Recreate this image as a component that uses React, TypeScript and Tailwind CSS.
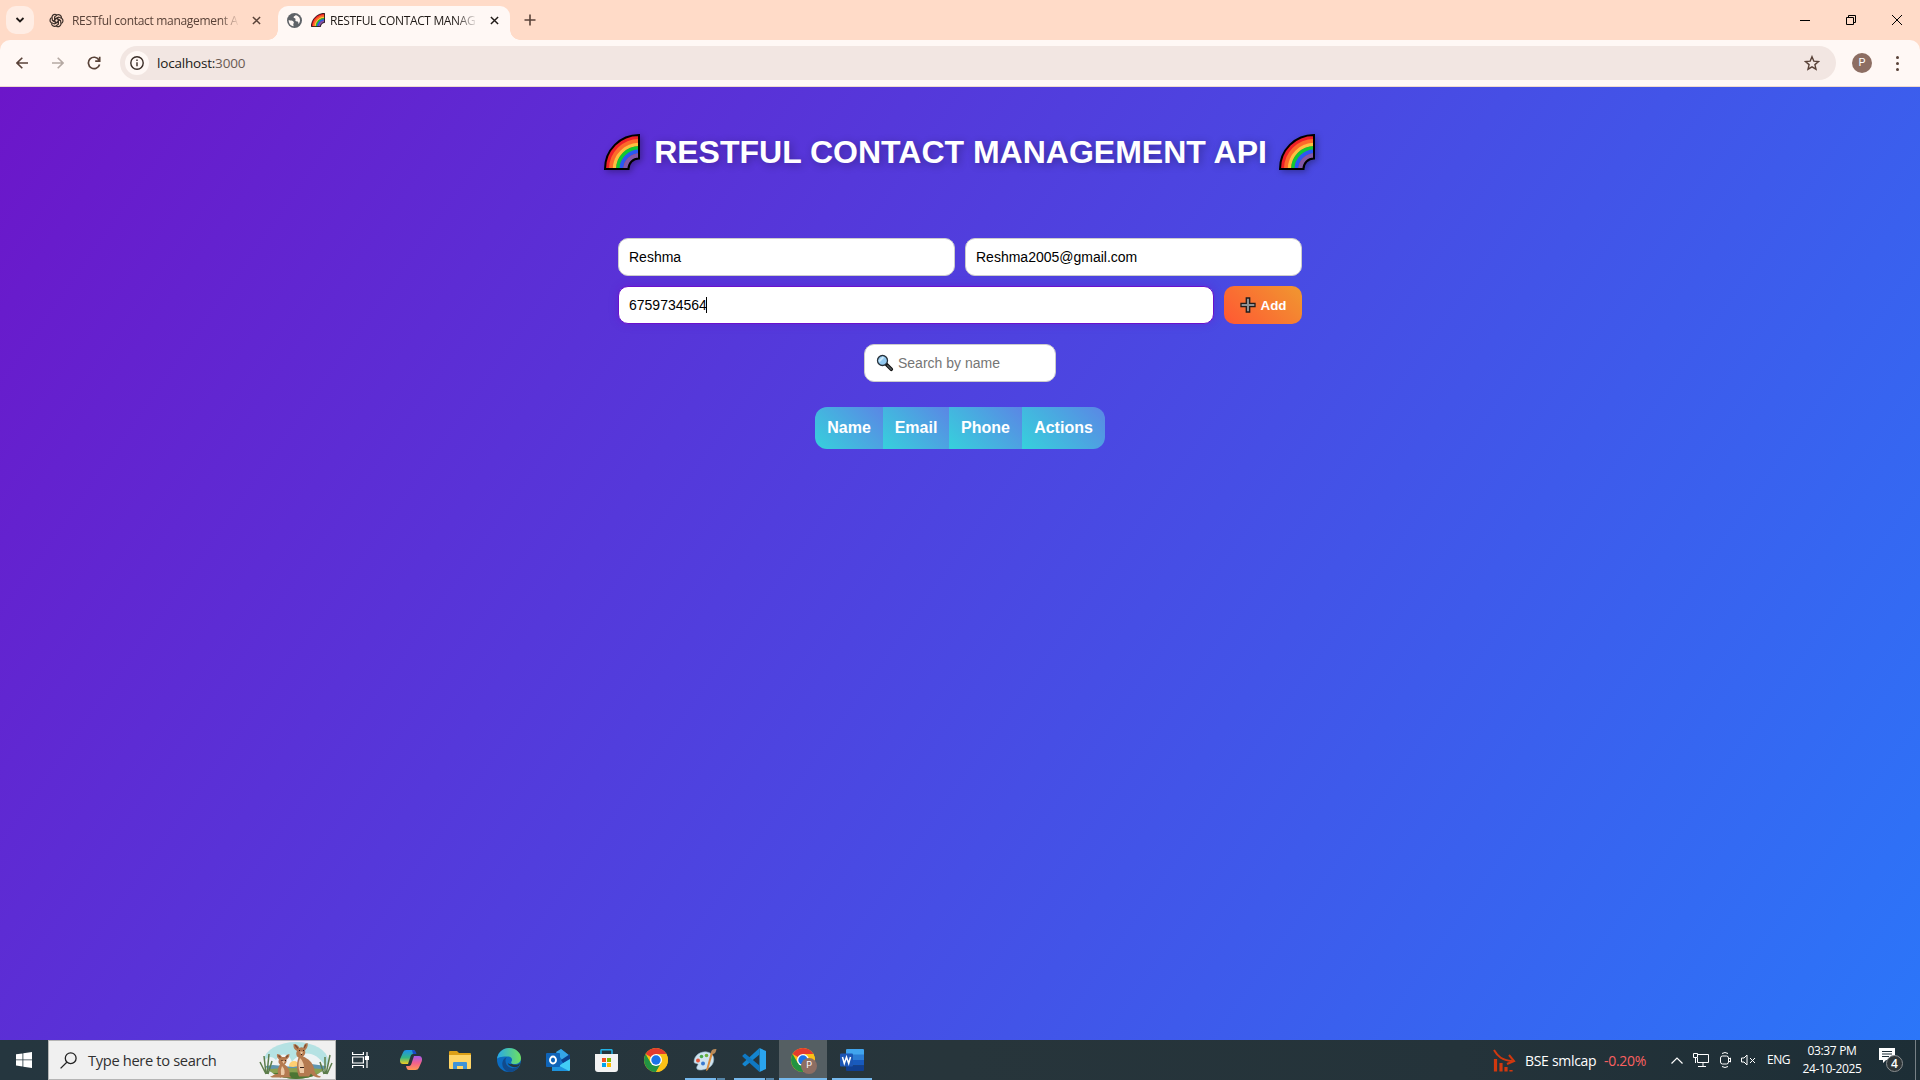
import React from "react";

type P = { className?: string };

const Rainbow = ({ className = "" }: P) => (
  <svg viewBox="0 0 36 36" className={className} fill="none">
    <path d="M35 1v23.500c-6 0-10.500 4.500-10.500 10.500H1C1 16 16 1 35 1z" fill="#f22c2c" />
    <path d="M35 3.500C18 3.500 3.500 18 3.500 35" stroke="#ee2028" strokeWidth="4" />
    <path d="M35 7C19.500 7 7 19.500 7 35" stroke="#fc6a2a" strokeWidth="4" />
    <path d="M35 10.500C21.500 10.500 10.500 21.500 10.500 35" stroke="#ffbf3f" strokeWidth="3.500" />
    <path d="M35 14C23.500 14 14 23.500 14 35" stroke="#12c832" strokeWidth="4" />
    <path d="M35 17.500C25.500 17.500 17.500 25.500 17.500 35" stroke="#2a58f2" strokeWidth="4" />
    <path d="M35 22C28 22 22 28 22 35" stroke="#8458a8" strokeWidth="5" />
    <path d="M35 1v23.500c-6 0-10.500 4.500-10.500 10.500H1C1 16 16 1 35 1z" stroke="#000" strokeWidth="2" />
  </svg>
);

const Chrome = ({ className = "" }: P) => (
  <svg viewBox="0 0 24 24" className={className}>
    <circle cx="12" cy="12" r="12" fill="#fbc116" />
    <path d="M12 12L1.610 6A12 12 0 0 1 22.390 6H12z" fill="#e33b2e" />
    <path d="M1.610 6A12 12 0 0 0 12 24L17.200 15 12 12 6.800 15z" fill="#229342" />
    <path d="M12 24A12 12 0 0 0 22.390 6H12l5.200 9z" fill="#fbc116" />
    <circle cx="12" cy="12" r="6" fill="#fff" />
    <circle cx="12" cy="12" r="4.700" fill="#1a73e8" />
  </svg>
);

const Close = ({ className = "" }: P) => (
  <svg viewBox="0 0 10 10" className={className} stroke="currentColor" strokeWidth="1.600">
    <path d="M1 1l8 8M9 1L1 9" />
  </svg>
);

function TabStrip() {
  return (
    <div className="flex h-10 items-start bg-[#ffdbc8]">
      <div className="ml-1.5 mt-1.5 flex h-7 w-7 items-center justify-center rounded-[10px] bg-[#ffede4]">
        <svg viewBox="0 0 10 10" className="h-2.5 w-2.5" fill="none" stroke="#201a17" strokeWidth="1.800">
          <path d="M1.500 3l3.500 3.500L8.500 3" />
        </svg>
      </div>
      <div className="ml-[15px] mt-1.5 flex h-[28px] w-[215px] items-center text-[#594238]">
        <svg viewBox="0 0 24 24" className="h-[15px] w-[15px]" fill="none" stroke="#3d302a" strokeWidth="1.900">
          {[0, 60, 120, 180, 240, 300].map((a) => (
            <path key={a} transform={`rotate(${a} 12 12)`} d="M9 13.700V6.200l4.500-3.400c3-1 6.500 1 6.500 5M9 10.300l6-3.500" />
          ))}
        </svg>
        <span className="ml-[8px] w-[168px] whitespace-nowrap pt-px font-['Open_Sans'] text-[12px] tracking-[-0.310px] [mask-image:linear-gradient(to_right,#000_88%,transparent)]">
          RESTful contact management A
        </span>
        <Close className="ml-[12px] h-[9px] w-[9px]" />
      </div>
      <div className="relative ml-[14px] mt-1.5 flex h-[34px] w-[232px] rounded-t-[10px] bg-[#fff8f5] pb-[6px] text-[#201a17]">
        <div className="absolute -left-[10px] bottom-0 h-[10px] w-[10px] bg-[radial-gradient(circle_at_0_0,transparent_9.500px,#fff8f5_10px)]" />
        <div className="absolute -right-[10px] bottom-0 h-[10px] w-[10px] bg-[radial-gradient(circle_at_100%_0,transparent_9.500px,#fff8f5_10px)]" />
        <div className="flex items-center pl-[9px]">
          <svg viewBox="0 0 16 16" className="h-[15px] w-[15px]">
            <circle cx="8" cy="8" r="8" fill="#5f6368" />
            <path d="M1.800 7.500c2 .8 4.600.3 5.400 2 .5 1.200-.7 1.500-.5 3 .1.700.5 1.200.3 1.700C3.600 13.700 1.700 11 1.800 7.500zM9.200 2c-.2 1.200-2 1-2.200 2.200-.2 1.300 1.500 1 2 2 .4 1-.6 1.600.2 2.300.8.600 2 .2 2.600 1 .5.700.2 1.500.5 2.200C14.800 9 14.800 3.600 9.200 2z" fill="#fff8f5" />
          </svg>
          <Rainbow className="ml-[9px] h-[14px] w-[14px]" />
          <span className="ml-[5px] w-[148px] whitespace-nowrap pt-px font-['Open_Sans'] text-[12px] tracking-[-0.350px] [mask-image:linear-gradient(to_right,#000_85%,transparent)]">
            RESTFUL CONTACT MANAG
          </span>
          <Close className="ml-[12px] h-[9px] w-[9px]" />
        </div>
      </div>
      <svg viewBox="0 0 12 12" className="ml-[14px] mt-[14px] h-3 w-3" stroke="#594238" strokeWidth="1.600">
        <path d="M6 .5v11M.5 6h11" />
      </svg>
      <div className="ml-auto flex h-10 items-center text-black">
        <svg viewBox="0 0 10 10" className="mr-[36px] h-[10px] w-[10px]" stroke="currentColor">
          <path d="M0 5.500h10" />
        </svg>
        <svg viewBox="0 0 10 10" className="mr-[36px] h-[10px] w-[10px]" fill="none" stroke="currentColor">
          <path d="M.5 2.500h7v7h-7zM2.500 2.500v-2h7v7h-2" />
        </svg>
        <svg viewBox="0 0 10 10" className="mr-[18px] h-[10px] w-[10px]" stroke="currentColor">
          <path d="M0 0l10 10M10 0L0 10" />
        </svg>
      </div>
    </div>
  );
}

function Toolbar() {
  return (
    <div className="bg-[#ffdbc8]">
      <div className="flex h-[47px] items-center rounded-t-[10px] border-b border-[#eed9cf] bg-[#fff8f5]">
        <svg viewBox="0 0 12 12" className="ml-4 h-3 w-3 text-[#594238]" fill="none" stroke="currentColor" strokeWidth="1.600">
          <path d="M12 6H1M6.300.7L1 6l5.300 5.300" />
        </svg>
        <svg viewBox="0 0 12 12" className="ml-6 h-3 w-3 text-[#b5a9a3]" fill="none" stroke="currentColor" strokeWidth="1.600">
          <path d="M0 6h11M5.700.7L11 6l-5.300 5.300" />
        </svg>
        <svg viewBox="0 0 14 14" className="ml-[23px] h-[14px] w-[14px] text-[#594238]" fill="none" stroke="currentColor" strokeWidth="1.700">
          <path d="M12 4A5.700 5.700 0 1 0 12.600 8.500M12.700.8v4.400H8.200" />
        </svg>
        <div className="ml-[19px] flex h-[34px] w-[1716px] items-center rounded-full bg-[#f2e6e2]">
          <div className="ml-[5px] flex h-6 w-6 items-center justify-center rounded-full bg-[#fff8f5]">
            <svg viewBox="0 0 14 14" className="h-[14px] w-[14px]" fill="none" stroke="#3a2c26" strokeWidth="1.400">
              <circle cx="7" cy="7" r="6.200" />
              <path d="M7 6.200v4M7 3.600v1.500" />
            </svg>
          </div>
          <span className="ml-[8px] font-['Open_Sans'] text-[13.500px] tracking-[-0.200px] text-[#201a17]">
            localhost:<span className="text-[#6b5b53]">3000</span>
          </span>
          <svg viewBox="0 0 16 16" className="ml-auto mr-[16px] h-4 w-4" fill="none" stroke="#594238" strokeWidth="1.400">
            <path d="M8 1.700l1.800 4.400 4.700.4-3.600 3.100 1.100 4.600L8 11.800l-4 2.400 1.100-4.600L1.500 6.500l4.700-.4z" />
          </svg>
        </div>
        <div className="ml-4 flex h-5 w-5 items-center justify-center rounded-full bg-[#8d6e63] font-['Roboto'] text-[11px] text-white">P</div>
        <div className="ml-[24px] flex flex-col gap-[3px]">
          <i className="h-[3px] w-[3px] rounded-full bg-[#594238]" />
          <i className="h-[3px] w-[3px] rounded-full bg-[#594238]" />
          <i className="h-[3px] w-[3px] rounded-full bg-[#594238]" />
        </div>
      </div>
    </div>
  );
}

const field = "flex h-[38px] items-center rounded-[10px] border bg-white px-[10px] text-[14px]";

function Page() {
  return (
    <main className="flex h-[953px] flex-col items-center bg-[linear-gradient(125deg,#6c16c9,#2b76f9)] font-['Liberation_Sans']">
      <h1 className="mt-[46px] flex h-[38px] items-center whitespace-nowrap text-[32px] font-bold text-white [text-shadow:2px_2px_8px_rgba(0,0,0,0.300)]">
        <Rainbow className="mr-[14px] h-[36px] w-[36px] drop-shadow-[2px_2px_3px_rgba(0,0,0,0.300)]" />
        <span>RESTFUL CONTACT MANAGEMENT API</span>
        <Rainbow className="ml-[12px] mr-px h-[36px] w-[36px] drop-shadow-[2px_2px_3px_rgba(0,0,0,0.300)]" />
      </h1>
      <div className="mt-[67px] flex w-[684px] flex-wrap gap-[10px]">
        <div className={field + " w-[337px] border-[#ccc] text-black"}>Reshma</div>
        <div className={field + " w-[337px] border-[#ccc] text-black"}>Reshma2005@gmail.com</div>
        <div className={field + " w-[596px] border-[#6a11cb] text-black shadow-[0_0_8px_rgba(106,17,203,0.400)]"}>
          6759734564
          <span className="-ml-px h-4 w-px bg-black" />
        </div>
        <button className="flex h-[38px] w-[78px] items-center justify-center rounded-[10px] bg-[linear-gradient(45deg,#ff5733,#f09830)] text-[13.333px] font-bold text-white">
          <svg viewBox="0 0 16 16" className="mr-[5px] h-4 w-4">
            <path d="M6.300 1h3.400v5.300H15v3.400H9.700V15H6.300V9.700H1V6.300h5.300z" fill="#8f9294" stroke="#211c1c" strokeWidth="1.300" />
          </svg>
          <span className="pt-px">Add</span>
        </button>
      </div>
      <div className={field + " mt-5 w-[192px] border-[#ccc] text-[#757575]"}>
        <svg viewBox="0 0 18 18" className="ml-px mr-[4px] h-[18px] w-[18px]">
          <path d="M10.500 10.500l4.800 4.800" stroke="#111" strokeWidth="3.600" strokeLinecap="round" />
          <path d="M11.500 11.500l3.700 3.700" stroke="#50585b" strokeWidth="1.600" strokeLinecap="round" />
          <circle cx="6.500" cy="6.500" r="5" fill="#92c9f0" stroke="#27313a" strokeWidth="1.300" />
          <path d="M3 7.500L7.500 3" stroke="#c9e8fc" strokeWidth="2" />
        </svg>
        Search by name
      </div>
      <div className="mt-[25px] flex h-[42px] overflow-hidden rounded-[12px] text-[16px] font-bold text-white">
        {[
          ["Name", "w-[68px]"],
          ["Email", "w-[66px]"],
          ["Phone", "w-[73px]"],
          ["Actions", "w-[83px]"],
        ].map(([t, w]) => (
          <div key={t} className={w + " flex items-center justify-center bg-[linear-gradient(45deg,#36d1dc,#5b86e5)]"}>
            {t}
          </div>
        ))}
      </div>
    </main>
  );
}

const Kangaroos = () => (
  <svg viewBox="0 0 76 38" className="h-[38px] w-[76px]">
    <defs>
      <clipPath id="scene">
        <ellipse cx="38" cy="19.500" rx="32" ry="18.500" />
      </clipPath>
    </defs>
    <g clipPath="url(#scene)">
      <path d="M0 0h76v38H0z" fill="#b5e2e3" />
      <path d="M4 26c2-10 9-13 14-7 5-9 14-6 16 2 8-10 22-14 34 5z" fill="#eef3f4" />
      <circle cx="36" cy="25" r="5" fill="#ffcf72" />
      <path d="M0 26l15-2 20 2 18-3 23 3v5H0z" fill="#5f95b0" />
      <path d="M0 29q38-4 76 0v9H0z" fill="#8aa050" />
      <path d="M8 33q30-4 60 1v4H8z" fill="#4d7534" />
    </g>
    <g fill="none" stroke="#5d7d4c" strokeWidth="1.500">
      <path d="M8 33L2 21M8 33L6 15M9 33l2-20M10 33l4-13M66 33l-4-12M67 33l0-17M68 33l4-19M69 33l5-11" />
    </g>
    <g fill="#b47a50">
      <path d="M35.500 3c3 0 5 2 6 4 1-1 3-1 4 0 0-2 1-5 4-5 1 3-1 6-2.500 7.500 1 3-.5 5-2 6 5 2 10 6 11 12 .5 4 2 7 7 8l-1 1c-5 0-8-2-9-4l-2 3H41c-2-4-3-13-.5-19-2-1-3-4-1.500-6.500-2-1-4-3-3.500-6z" />
      <path d="M19 13c2 0 4 1 5 3h3c1-2 3-3 4.500-3 0 3-1.500 5-3 5.500.5 2.500-.5 4-2 5 3 2 6 6 5 11l2 2H22c-3-4-3-9 0-13-1.500-1-2-3-1-5-1.500-1-2.500-3-2-5.500z" />
      <path d="M24 33q-7-1-10 2l-2 .5 2 1h9z" />
    </g>
    <path d="M42 17q5 4 4 15h-4q-3-8 0-15zM24 25q4 4 2 9h-3q-1-5 1-9zM42 10.500l3 .2-1.500 3.500zM24 20l3 .2-1.500 2.500z" fill="#ecc8a4" />
    <path d="M37 4l3 3.500M48 3.500L46 7M20.500 14.500l2 2M30 14.500l-2 2" stroke="#7c4a32" strokeWidth="1.200" />
    <path d="M41 9h1v1h-1zM45 9h1v1h-1zM43 13h1v1h-1zM23.500 19h1v1h-1zM27 19h1v1h-1zM42 26h4v1h-4z" fill="#35201a" />
  </svg>
);

const slot = "relative flex h-10 w-[49px] items-center justify-center";

function Taskbar() {
  return (
    <footer className="flex h-10 bg-[linear-gradient(90deg,#25363f,#27353b_50%,#24333a_76%,#1d2e36)] text-white">
      <div className="flex w-12 items-center justify-center">
        <svg viewBox="0 0 16 16" className="h-4 w-4" fill="#fff">
          <path d="M0 2.300l6.500-.9v6.100H0zM7.300 1.300L16 0v7.500H7.300zM0 8.300h6.500v6.200L0 13.600zM7.300 8.300H16V16l-8.700-1.300z" />
        </svg>
      </div>
      <div className="flex w-[288px] items-center border border-[#b5b5b5] bg-[#f0f0f0]">
        <svg viewBox="0 0 17 17" className="ml-[11px] h-[17px] w-[17px]" fill="none" stroke="#222" strokeWidth="1.300">
          <circle cx="10.700" cy="6.200" r="5.400" />
          <path d="M6.800 10.200L.6 16.400" />
        </svg>
        <span className="ml-[11px] whitespace-nowrap font-['Open_Sans'] text-[14.700px] tracking-[-0.350px] text-[#303030]">Type here to search</span>
        <div className="ml-auto mr-px"><Kangaroos /></div>
      </div>
      <div className={slot}>
        <svg viewBox="0 0 17 16" className="h-4 w-[17px]" fill="none" stroke="#fff" strokeWidth="1.200">
          <path d="M.6 0v2.500h10.800V0M.6 16v-2.500h10.800V16M.6 5h10.800v6H.6zM15 0v16" />
          <path d="M13.500 4.500h3v3h-3z" fill="#fff" />
        </svg>
      </div>
      <div className={slot + " ml-px"}>
        <svg viewBox="0 0 22 20" className="h-5 w-[22px]">
          <defs>
            <linearGradient id="cpa" x1="0" y1="0" x2="0" y2="1"><stop stopColor="#1c8ff0" /><stop offset=".55" stopColor="#35b884" /><stop offset="1" stopColor="#f5cf20" /></linearGradient>
            <linearGradient id="cpb" x1="0" y1="0" x2="0" y2="1"><stop stopColor="#a45bea" /><stop offset=".5" stopColor="#f2608c" /><stop offset="1" stopColor="#ff9a52" /></linearGradient>
          </defs>
          <path d="M6.500 0H13c2 0 2.500 2 3 4h-3c-1.500 0-2 1-2.500 2.500L8 14H3c-3 0-3.500-3-2.700-5.500L3 2.500C3.700.8 4.800 0 6.500 0z" fill="url(#cpa)" />
          <path d="M15.500 20H9c-2 0-2.500-2-3-4h3c1.500 0 2-1 2.500-2.500L14 6h5c3 0 3.500 3 2.700 5.500L19 17.500c-.7 1.700-1.800 2.500-3.500 2.500z" fill="url(#cpb)" />
          <path d="M12 0c3 0 4 2 4.500 4H13z" fill="#1948c8" />
        </svg>
      </div>
      <div className={slot}>
        <svg viewBox="0 0 22 18" className="h-[18px] w-[22px]">
          <path d="M0 1q0-1 1-1h7l2 2h11q1 0 1 1v14H0z" fill="#dda017" />
          <path d="M0 4h22v13q0 1-1 1H1q-1 0-1-1z" fill="#ffd567" />
          <path d="M4 18v-6q0-1 1-1h12q1 0 1 1v6h-4v-3H8v3z" fill="#3f93d8" />
        </svg>
      </div>
      <div className={slot}>
        <svg viewBox="0 0 24 24" className="h-6 w-6">
          <defs>
            <linearGradient id="eda" x1="0" x2="1"><stop stopColor="#28a8e8" /><stop offset="1" stopColor="#6ee060" /></linearGradient>
          </defs>
          <circle cx="12" cy="12" r="12" fill="#0c6bc0" />
          <path d="M0 11C1 4 6 0 12 0c7 0 12 5 12 10 0 4-3 6-6.500 6-3 0-4-1.300-3-2.500 1.500-2 0-5-3.500-5C6 8.500 1 9 0 11z" fill="url(#eda)" />
          <path d="M8.500 12c-.5 5 4 9 9 8 2-.3 3-1.200 4.500-2-2 4-6 6-10 6C7 23 4.500 18 5.500 14 6 11.500 8 9.500 10 9c-1 1-1.400 2-1.500 3z" fill="#114a8b" />
          <path d="M15 16c3 1.500 6 1 8.500-1l-1.700 3c-5 2.500-10 .7-11-3 1 .9 2.400 1.400 4.200 1z" fill="#27343b" />
        </svg>
      </div>
      <div className={slot}>
        <svg viewBox="0 0 24 22" className="h-[22px] w-6">
          <path d="M6 7l9-7 9 7v14H6z" fill="#1170c8" />
          <path d="M10 3l5-3 9 7-7 5z" fill="#35a5e8" />
          <path d="M6 22l18-13v12q0 1-1 1z" fill="#42cdf5" />
          <path d="M6 13l17 9H6z" fill="#1d93dd" />
          <path d="M24 5v5l-7 4-2-3z" fill="#0c3f8c" />
          <rect y="4" width="14" height="14" rx="1" fill="#0f64b8" />
          <ellipse cx="7" cy="11" rx="3" ry="3.500" fill="none" stroke="#fff" strokeWidth="1.900" />
        </svg>
      </div>
      <div className={slot}>
        <svg viewBox="0 0 23 23" className="h-[23px] w-[23px]">
          <path d="M6 6V1.500q0-.8.800-.8h9.400q.8 0 .8.800V6" fill="none" stroke="#22b3e6" strokeWidth="1.500" />
          <path d="M0 5h23v15q0 3-3 3H3q-3 0-3-3z" fill="#f3f3f3" />
          <path d="M7 9h4v4H7z" fill="#f25022" /><path d="M12 9h4v4h-4z" fill="#7fba00" />
          <path d="M7 14h4v4H7z" fill="#00a4ef" /><path d="M12 14h4v4h-4z" fill="#ffb900" />
        </svg>
      </div>
      <div className={slot}><Chrome className="h-6 w-6" /></div>
      <div className={slot}>
        <svg viewBox="0 0 24 24" className="h-6 w-6">
          <path d="M1 14C1 7 8 3 14 4c6 1 8 6 6 11s-8 7-13 7c-4 0-4-3-2-5 1-2-4-1-4-3z" fill="#cfe3ef" stroke="#8fb0c4" strokeWidth=".6" />
          <circle cx="5" cy="12.500" r="2" fill="#e4573d" /><circle cx="8.500" cy="8.500" r="1.800" fill="#48a84c" />
          <circle cx="13.500" cy="7.500" r="1.800" fill="#6cb23c" /><circle cx="10" cy="15.500" r="2" fill="#3979cf" />
          <path d="M20 5l-5 17-2 1 .5-2.500L18 4z" fill="#d88a3c" />
          <path d="M18 4.500c0-2 2-4 5.500-3.500-.5 3-1.500 5-4 5z" fill="#b98b5a" />
        </svg>
        <span className="absolute bottom-0 left-[5px] h-0.5 w-[31px] bg-[#76b9ed]" />
        <span className="absolute bottom-0 left-[37px] h-0.5 w-[8px] bg-[#5585a8]" />
      </div>
      <div className={slot}>
        <svg viewBox="0 0 24 24" className="h-6 w-6">
          <path d="M17.500 0L24 3v18l-6.500 3z" fill="#2aa5f0" />
          <path d="M17.500 0v6.500L3 18.500.500 16.500v-1z" fill="#1485cf" />
          <path d="M17.500 24v-6.500L3 5.500.500 7.500v1z" fill="#0f78c2" />
        </svg>
        <span className="absolute bottom-0 left-[5px] h-0.5 w-[31px] bg-[#76b9ed]" />
        <span className="absolute bottom-0 left-[37px] h-0.5 w-[8px] bg-[#5585a8]" />
      </div>
      <div className="relative ml-px flex h-10 w-12 items-center justify-center bg-[#555f63]">
        <Chrome className="h-6 w-6" />
        <span className="absolute left-[22px] top-[18px] flex h-4 w-4 items-center justify-center rounded-full bg-[#8d6e63] font-['Roboto'] text-[9px]">P</span>
        <span className="absolute bottom-0 left-0 h-0.5 w-12 bg-[#76b9ed]" />
      </div>
      <div className={slot}>
        <svg viewBox="0 0 24 22" className="h-[22px] w-6">
          <path d="M6 1q0-1 1-1h16q1 0 1 1v5H6z" fill="#41a5ee" /><path d="M6 5.500h18V11H6z" fill="#2b7cd3" />
          <path d="M6 11h18v5.500H6z" fill="#185abd" /><path d="M6 16.500h18V21q0 1-1 1H7q-1 0-1-1z" fill="#103f91" />
          <rect y="4.500" width="13" height="13" rx="1" fill="#1c56b4" />
          <path d="M2.500 8l1.800 6.500L6.500 8l2.200 6.500L10.500 8" fill="none" stroke="#fff" strokeWidth="1.500" />
        </svg>
        <span className="absolute bottom-0 left-[5px] h-0.5 w-10 bg-[#76b9ed]" />
      </div>
      <div className="ml-auto flex items-center font-['Open_Sans']">
        <svg viewBox="0 0 23 23" className="h-[23px] w-[23px] text-[#d2380e]" fill="none" stroke="currentColor">
          <path d="M1 1c4 7 8 10 18 11" strokeWidth="2" />
          <path d="M16 6l5 6-7 3" strokeWidth="2" />
          <path d="M2.500 10v12.500M8 14v8.500M13 18v4.500M18 21v1.500" strokeWidth="3.200" />
        </svg>
        <span className="ml-[9px] w-[70px] whitespace-nowrap text-[14px] tracking-[-0.300px]">BSE smlcap</span>
        <span className="ml-[9px] w-[43px] whitespace-nowrap text-[14px] tracking-[-0.300px] text-[#fc6060]">-0.20%</span>
        <svg viewBox="0 0 12 7" className="ml-[24px] h-[7px] w-3" fill="none" stroke="#fff" strokeWidth="1.200"><path d="M.5 6.500L6 1l5.500 5.500" /></svg>
        <svg viewBox="0 0 16 14" className="ml-[10px] h-[14px] w-4" fill="none" stroke="#fff"><path d="M5 1.500h10.500v8H4.500V5M10 10v3M5 13.500h8M.5.500h4v4h-4zM2.500 5v5" /></svg>
        <svg viewBox="0 0 12 16" className="ml-[11px] h-4 w-3" fill="none" stroke="#fff"><path d="M2 1.500Q5-.5 8 1.500M2 14.500q3 2 6 0" /><rect x=".5" y="4" width="8" height="8" rx="2" /><path d="M8.500 7l2-1v4l-2-1" /></svg>
        <svg viewBox="0 0 15 12" className="ml-[9px] h-3 w-[15px]" fill="none" stroke="#fff"><path d="M.5 4v4H3l3 3V1L3 4zM9 4l5 5M14 4L9 9" /></svg>
        <span className="ml-[11px] w-[23px] text-[12px] tracking-[-0.500px]">ENG</span>
        <div className="ml-[12px] flex w-[60px] flex-col items-center whitespace-nowrap text-[12px] leading-[18px] tracking-[-0.350px]">
          <span>03:37 PM</span>
          <span>24-10-2025</span>
        </div>
        <div className="relative ml-[17px] h-6 w-6">
          <svg viewBox="0 0 16 16" className="h-4 w-4"><path d="M0 0h16v12H7l-3 3v-3H0z" fill="#fff" /><path d="M3 3.500h10M3 6h10M3 8.500h7" stroke="#1d2e36" /></svg>
          <span className="absolute left-[7px] top-[7px] flex h-[17px] w-[17px] items-center justify-center rounded-full border border-[#8b8f91] bg-[#2e3537] text-[12px] font-semibold">4</span>
        </div>
        <div className="ml-[12px] mr-[4px] h-10 w-px bg-[#778186]" />
      </div>
    </footer>
  );
}

export default function App() {
  return (
    <div className="flex h-[1080px] w-[1920px] flex-col overflow-hidden">
      <TabStrip />
      <Toolbar />
      <Page />
      <Taskbar />
    </div>
  );
}
